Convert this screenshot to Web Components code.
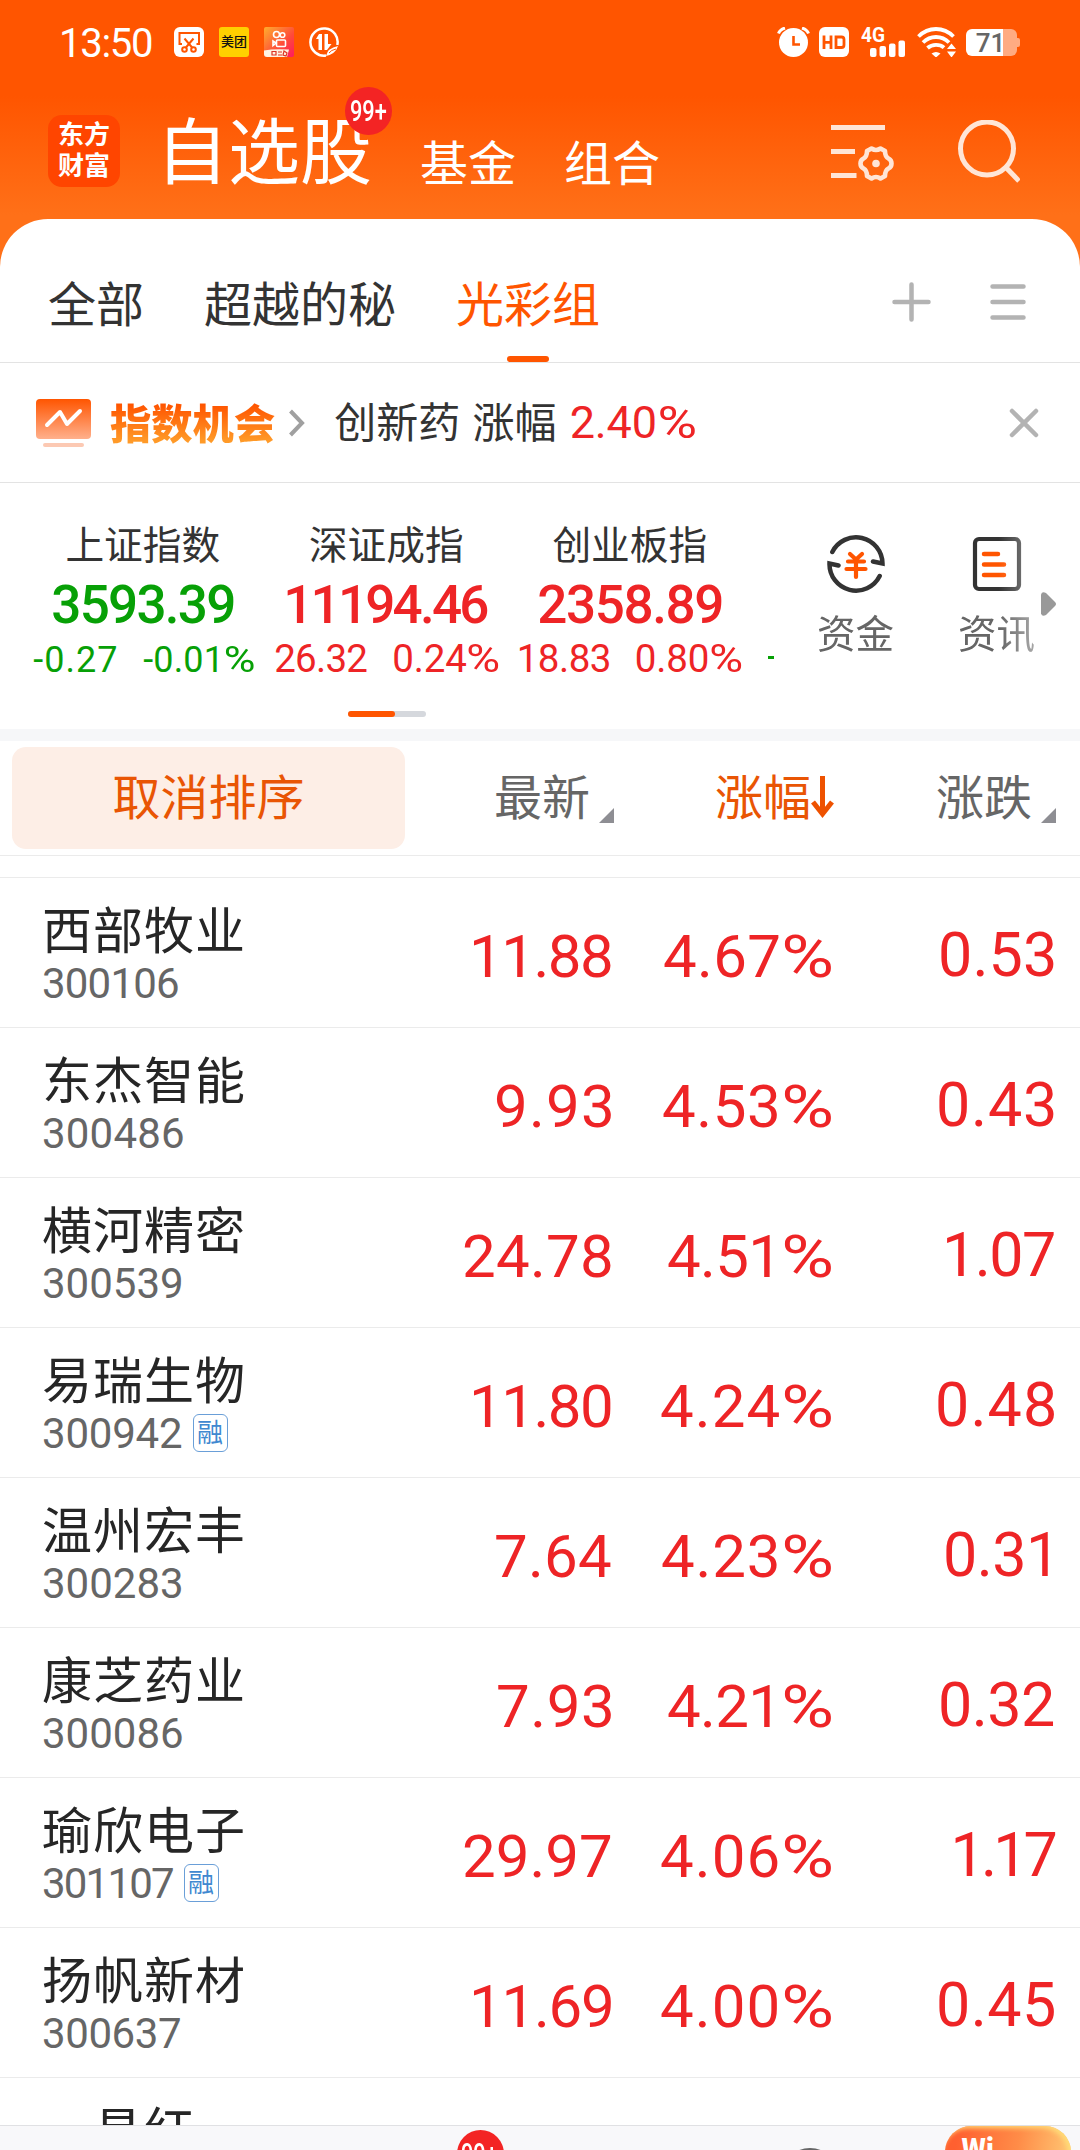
<!DOCTYPE html>
<html lang="zh-CN">
<head>
<meta charset="utf-8">
<title>自选股</title>
<style>
  html, body { margin: 0; padding: 0; }
  body {
    width: 1080px;
    height: 2150px;
    overflow: hidden;
    background: #fff;
    font-family: "Noto Sans CJK SC", sans-serif;
    --num: Roboto, "Noto Sans", sans-serif;
    --red: #ee2426;
    --green: #07a006;
    --orange: #ff5500;
    --line: #ebebeb;
  }
</style>
</head>
<body>
<stock-app></stock-app>

<script>
// Text whose letter spacing is adjusted so that its ink fills the given width.
// With the "squeeze" attribute the glyphs are condensed instead.
class FitText extends HTMLElement {
  connectedCallback() {
    this.attachShadow({ mode: "open" });
    this.shadowRoot.innerHTML = `
      <style>
        :host { display: inline-block; white-space: nowrap; flex: none; }
        span { display: inline-block; transform-origin: 0 50%; }
        i { display: inline-block; font-style: normal; transform: scaleX(1.2); transform-origin: 100% 50%; letter-spacing: 0; }
      </style>
      <span></span>
    `;
    this.fit();
  }

  fit() {
    const text = this.getAttribute("text");
    const width = Number(this.getAttribute("width"));
    const span = this.shadowRoot.querySelector("span");
    const cs = getComputedStyle(this);
    const ctx = document.createElement("canvas").getContext("2d");
    ctx.font = `${cs.fontWeight} ${cs.fontSize} ${cs.fontFamily}`;
    const m = ctx.measureText(text);
    let ink = m.actualBoundingBoxLeft + m.actualBoundingBoxRight;
    this.style.width = width + "px";

    if (this.hasAttribute("squeeze")) {
      const k = width / ink;
      span.textContent = text;
      span.style.transform = `scaleX(${k})`;
      span.style.marginLeft = m.actualBoundingBoxLeft * k + "px";
      return;
    }

    // the percent sign is drawn a little wider than the font has it
    if (text.endsWith("%")) {
      const extra = ctx.measureText("%").width * 0.2;
      ink += extra;
      span.innerHTML = `${text.slice(0, -1)}<i style="margin-left:${extra}px">%</i>`;
    } else {
      span.textContent = text;
    }
    span.style.letterSpacing = (width - ink) / (text.length - 1) + "px";
    span.style.marginLeft = m.actualBoundingBoxLeft + "px";
  }
}

class StatusBar extends HTMLElement {
  connectedCallback() {
    this.attachShadow({ mode: "open" });
    this.shadowRoot.innerHTML = `
      <style>
        :host { display: flex; height: 84px; padding: 0 60px 0 62px; color: #fff; font-family: var(--num); }
        .side { display: flex; align-items: center; height: 84px; }
        .time { font-size: 40px; line-height: 50px; font-weight: 400; margin-right: 22px; padding-top: 3px; }
        .left svg, .mt { margin-right: 15px; }
        .right { margin-left: auto; }
        svg { display: block; flex: none; }
        .mt {
          width: 30px; height: 30px; border-radius: 3px; background: #ffd000; color: #111;
          font: 500 13px/28px "Noto Sans CJK SC", sans-serif; text-align: center;
        }
        .battery { display: flex; align-items: center; }
        .cell {
          width: 51px; height: 27px; border-radius: 6px; text-align: center; margin-top: 1px;
          background: linear-gradient(90deg, #fff 37px, #ffab82 37px);
          color: #666; font-weight: 500; font-size: 26px; line-height: 28px; text-indent: -2px;
        }
        .tip { width: 3px; height: 9px; background: #ffab82; border-radius: 0 2px 2px 0; }
      </style>
      <div class="side left">
        <fit-text class="time" text="13:50" width="90"></fit-text>
        <svg width="30" height="30" viewBox="0 0 30 30">
          <rect width="30" height="30" rx="6" fill="#fff"/>
          <g fill="none" stroke="#ff5500" stroke-width="2">
            <path d="M8 17H5.500V6H25v11h-2.500"/>
            <path d="M10.500 11.500l8 9.500M19.500 11.500l-8 9.500"/>
            <circle cx="10.500" cy="22.500" r="2.300"/><circle cx="19.500" cy="22.500" r="2.300"/>
          </g>
        </svg>
        <div class="mt">美团</div>
        <svg width="30" height="30" viewBox="0 0 30 30">
          <defs>
            <linearGradient id="ks" x1="0" y1="0" x2="1" y2="1">
              <stop offset="0" stop-color="#ffae2e"/><stop offset=".6" stop-color="#ff4a3a"/><stop offset="1" stop-color="#ff1a60"/>
            </linearGradient>
          </defs>
          <rect width="30" height="30" rx="2" fill="url(#ks)"/>
          <g fill="none" stroke="#fff" stroke-width="1.600">
            <circle cx="12.500" cy="7.500" r="3"/><circle cx="18.500" cy="8" r="2.300"/>
            <rect x="12.500" y="13" width="9" height="6.500" rx="1"/>
            <path d="M12 16l-3-2v4.500z"/>
          </g>
          <path d="M0 23.500q10-2 25-1l-2 7.500H3q-3 0-3-3z" fill="#fff3e0"/>
          <path d="M8 24.500h4v3.500H8zM14 25h4M14 28h4M20 24l3 2-1 3-3-1z" stroke="#d32" stroke-width="1.200" fill="none"/>
        </svg>
        <svg width="30" height="30" viewBox="0 0 30 30">
          <path d="M28.300 18A13.600 13.600 0 1 0 17 28.500" fill="none" stroke="#fff" stroke-width="2.500"/>
          <path d="M7 12l3-5h3v16h-3.500V12z" fill="#fff"/>
          <path d="M15.500 7H19v10h3.500l-4.500 6h-2.500z" fill="#fff"/>
          <path d="M17 29q1.500-8 12-10-2.500 8-12 10z" fill="#fff"/>
          <path d="M20 26q2-3 7-4" stroke="#ff5500" stroke-width="1" fill="none"/>
        </svg>
      </div>
      <div class="side right">
        <svg width="33" height="30" viewBox="0 0 33 30" style="margin-right:9px">
          <circle cx="16.500" cy="15.500" r="14.500" fill="#fff"/>
          <path d="M1.500 6.500Q3 2.500 8 1M31.500 6.500Q30 2.500 25 1" stroke="#fff" stroke-width="3" fill="none"/>
          <path d="M16.500 9v8.500H23" stroke="#ff5500" stroke-width="2.600" fill="none"/>
        </svg>
        <svg width="30" height="30" viewBox="0 0 30 30" style="margin-right:12px">
          <rect width="30" height="30" rx="6" fill="#fff"/>
          <path d="M5 8.500v13.500M12 8.500v13.500M5 15.300h7M17 10h5.500q2.500 0 2.500 2.500v5.500q0 2.500-2.500 2.500H17z" stroke="#ff5500" stroke-width="2.800" fill="none"/>
        </svg>
        <svg width="44" height="30" viewBox="0 0 44 30" style="margin-right:12px">
          <text x="0" y="15" font-family="Roboto" font-size="21" font-weight="700" fill="#fff" textLength="24" lengthAdjust="spacingAndGlyphs">4G</text>
          <g fill="#fff">
            <rect x="9" y="21" width="6.500" height="9" rx="2"/><rect x="18.500" y="19" width="6.500" height="11" rx="2"/>
            <rect x="28" y="16.500" width="6.500" height="13.500" rx="2"/><rect x="37.500" y="13.500" width="6.500" height="16.500" rx="2"/>
          </g>
        </svg>
        <svg width="39" height="30" viewBox="0 0 39 30" style="margin-right:10px">
          <g fill="none" stroke="#fff" stroke-width="3.800">
            <path d="M1.500 9.500Q9 2 19 2t17.500 7.500"/>
            <path d="M6 15.500Q11.500 10 19 10t13 5.500"/>
            <path d="M10.500 21Q14 17.800 19 17.800t8 2.800"/>
          </g>
          <path d="M14.500 26.500q4.500-3 9 0L19 30.500zM34.500 16.500l4.500 5.500h-9zM34.500 30.500l4.500-6h-9z" fill="#fff"/>
        </svg>
        <div class="battery"><div class="cell">71</div><div class="tip"></div></div>
      </div>
    `;
  }
}

class AppHeader extends HTMLElement {
  connectedCallback() {
    this.attachShadow({ mode: "open" });
    this.shadowRoot.innerHTML = `
      <style>
        :host { display: flex; align-items: center; height: 135px; padding: 0 60px 0 48px; color: #fff; }
        .logo {
          width: 72px; height: 72px; border-radius: 14px; background: #ff4500; margin: -1px 36px 0 0;
          box-sizing: border-box; padding-top: 2px;
          font-size: 26px; line-height: 31px; font-weight: 700; text-align: center;
        }
        .title { position: relative; font-size: 72px; line-height: 80px; padding-bottom: 9px; }
        .link { font-size: 48px; line-height: 60px; padding-top: 17px; margin-left: 48px; }
        .badge {
          position: absolute; right: -20px; top: -20px; width: 47px; height: 48px; border-radius: 50%;
          background: #f32424; display: flex; align-items: center; justify-content: center;
          font: 500 29px/48px var(--num);
        }
        .tools { display: flex; align-items: center; margin-left: auto; gap: 64px; }
        svg { display: block; }
      </style>
      <div class="logo">东方<br>财富</div>
      <div class="title">自选股<div class="badge"><fit-text squeeze text="99+" width="36"></fit-text></div></div>
      <div class="link">基金</div>
      <div class="link">组合</div>
      <div class="tools">
        <svg width="63" height="64" viewBox="0 0 63 64" fill="none" stroke="#ffe5d6" stroke-width="5">
          <path d="M0 7.500h54M0 31.500h24M0 55.500h25.500"/>
          <path stroke-width="4.600" stroke-linejoin="round" d="M40.500 28.500Q45 31.500 49.500 28.500L54 31Q54 36.500 57.500 38.500Q60.500 40 60.500 43.500T57.500 48.500Q54 50.500 54 56L49.500 58.500Q45 55.500 40.500 58.500L36 56Q36 50.500 32.500 48.500Q29.500 47 29.500 43.500T32.500 38.500Q36 36.500 36 31Z"/>
          <circle cx="45" cy="43.500" r="3.800" fill="#ffe5d6" stroke="none"/>
        </svg>
        <svg width="62" height="64" viewBox="0 0 62 64" fill="none" stroke="#ffe5d6" stroke-width="5">
          <circle cx="29" cy="28.500" r="26.500"/>
          <path d="M48 47.500l13 13.500"/>
        </svg>
      </div>
    `;
  }
}

class GroupTabs extends HTMLElement {
  connectedCallback() {
    this.attachShadow({ mode: "open" });
    this.shadowRoot.innerHTML = `
      <style>
        :host {
          display: flex; height: 143px; padding: 0 54px 0 48px; gap: 60px;
          border-bottom: 1px solid #e3e3e3; color: #333; font-size: 48px; line-height: 60px;
        }
        .tab { position: relative; padding-top: 52px; }
        .active { color: var(--orange); }
        .active::after {
          content: ""; position: absolute; left: 51px; bottom: 0;
          width: 42px; height: 6px; border-radius: 3px; background: var(--orange);
        }
        .tools { margin-left: auto; display: flex; gap: 59px; padding-top: 63px; }
        svg { display: block; }
      </style>
      <div class="tab">全部</div>
      <div class="tab">超越的秘</div>
      <div class="tab active">光彩组</div>
      <div class="tools">
        <svg width="39" height="40" stroke="#b3b3b3" stroke-width="4.500" stroke-linecap="round"><path d="M2.500 20h34M19.500 2.500v35"/></svg>
        <svg width="36" height="40" stroke="#b3b3b3" stroke-width="4.500" stroke-linecap="round"><path d="M2.500 4.500h31M2.500 20h31M2.500 35.500h31"/></svg>
      </div>
    `;
  }
}

class ChanceBar extends HTMLElement {
  connectedCallback() {
    this.attachShadow({ mode: "open" });
    this.shadowRoot.innerHTML = `
      <style>
        :host {
          display: flex; align-items: center; height: 119px; padding: 0 41px 0 36px;
          border-bottom: 1px solid #e3e3e3; color: #333; font-size: 42px; line-height: 60px;
        }
        svg { display: block; flex: none; }
        .name {
          margin: 0 14px 4px 18px; font-size: 41.300px; font-weight: 900;
          background: linear-gradient(#ff5500 14px, #ff9a28 50px);
          -webkit-background-clip: text; background-clip: text; color: transparent;
        }
        .text { margin: 0 0 5px 29px; white-space: pre; word-spacing: 3px; }
        .rate { margin-left: 15px; font: 45px/60px var(--num); color: var(--red); padding-top: 1px; }
        .close { margin-left: auto; }
      </style>
      <svg width="56" height="50" viewBox="0 0 56 50">
        <defs><linearGradient id="g" x1="0" y1="0" x2="0" y2="1"><stop offset="0" stop-color="#ff5500"/><stop offset="1" stop-color="#ffb08c"/></linearGradient></defs>
        <rect x="0" y="1" width="55" height="40" rx="4" fill="url(#g)"/>
        <rect x="7" y="45" width="41" height="4" rx="2" fill="#fcc9b3"/>
        <path d="M11 27l13-13 7 12 13-13" fill="none" stroke="#fff" stroke-width="4" stroke-linecap="round" stroke-linejoin="round"/>
      </svg>
      <div class="name">指数机会</div>
      <svg width="16" height="28" fill="none" stroke="#a0a0a0" stroke-width="4"><path d="M1.500 2l11.500 12L1.500 26"/></svg>
      <div class="text">创新药 涨幅</div>
      <fit-text class="rate" text="2.40%" width="123"></fit-text>
      <svg class="close" width="30" height="30" stroke="#b3b3b3" stroke-width="4.500" stroke-linecap="round"><path d="M3 3l24 24M27 3L3 27"/></svg>
    `;
  }
}

class IndexCard extends HTMLElement {
  connectedCallback() {
    const d = JSON.parse(this.getAttribute("data"));
    this.attachShadow({ mode: "open" });
    this.shadowRoot.innerHTML = `
      <style>
        :host { display: flex; flex-direction: column; align-items: center; width: 243.500px; flex: none; color: var(--red); }
        :host([down]) { color: var(--green); }
        .name { font-size: 38.700px; line-height: 50px; color: #333; margin-top: 34px; }
        .price { font: 500 53px/60px var(--num); margin: 7.500px 0 0 2px; }
        .sub { display: flex; justify-content: center; gap: 27px; font: 38.500px/44px var(--num); margin: 2px 0 0 2px; }
        :host([down]) .sub { font-size: 36px; line-height: 46px; }
      </style>
      <div class="name">${d.name}</div>
      <fit-text class="price" text="${d.price[0]}" width="${d.price[1]}"></fit-text>
      <div class="sub">
        <fit-text text="${d.diff[0]}" width="${d.diff[1]}"></fit-text>
        <fit-text text="${d.rate[0]}" width="${d.rate[1]}"></fit-text>
      </div>
    `;
  }
}

class IndexPanel extends HTMLElement {
  connectedCallback() {
    const cards = [
      { name: "上证指数", price: ["3593.39", 181], diff: ["-0.27", 83], rate: ["-0.01%", 111], down: true },
      { name: "深证成指", price: ["11194.46", 200], diff: ["26.32", 92], rate: ["0.24%", 105] },
      { name: "创业板指", price: ["2358.89", 183], diff: ["18.83", 90], rate: ["0.80%", 105] },
    ];
    this.attachShadow({ mode: "open" });
    this.shadowRoot.innerHTML = `
      <style>
        :host { display: block; height: 246px; border-bottom: 12px solid #f6f7f9; }
        .row { display: flex; height: 228px; }
        .cards { display: flex; width: 774px; padding-left: 21px; box-sizing: border-box; overflow: hidden; }
        .next { flex: none; width: 6px; height: 3px; background: var(--green); margin: 173px 0 0 16px; }
        .actions {
          display: flex; width: 262px; padding-left: 43px; box-sizing: border-box;
          color: #666; font-size: 38.500px; line-height: 50px;
          -webkit-mask-image: linear-gradient(90deg, #000 225px, rgba(0,0,0,.55) 262px);
          mask-image: linear-gradient(90deg, #000 225px, rgba(0,0,0,.55) 262px);
        }
        .action { flex: none; width: 77px; display: flex; flex-direction: column; align-items: center; }
        .action + .action { margin-left: 64px; }
        .action svg { display: block; margin: 51px 0 12px; }
        .arrow { margin: 108px 0 0 5px; flex: none; }
        .pager { width: 78px; height: 6px; border-radius: 3px; background: #d5d8dd; margin-left: 348px; }
        .pager div { width: 47px; height: 6px; border-radius: 3px; background: var(--orange); }
      </style>
      <div class="row">
        <div class="cards">
          ${cards.map((c) => `<index-card ${c.down ? "down" : ""} data='${JSON.stringify(c)}'></index-card>`).join("")}
          <div class="next"></div>
        </div>
        <div class="actions">
          <div class="action">
            <svg width="60" height="60" viewBox="0 0 60 60" fill="none">
              <g stroke="#333" stroke-width="4.500">
                <path stroke-linecap="round" d="M6.300 18A26.500 26.500 0 0 1 56.500 29.500L47 27.500"/>
                <path stroke-linecap="round" d="M53.700 42A26.500 26.500 0 0 1 3.500 29.500L12.500 31.500"/>
              </g>
              <path stroke="#ff5500" stroke-width="4.200" stroke-linecap="round" d="M24 20l6 5.500 6-5.500M30 26v17M22 27.500h16M20.500 35h19"/>
            </svg>
            <div>资金</div>
          </div>
          <div class="action">
            <svg width="60" height="60" viewBox="0 0 60 60" fill="none">
              <rect x="8" y="5" width="44" height="50" rx="4" stroke="#333" stroke-width="4.200"/>
              <path d="M17 20h14M17 30.500h20M17 41h20" stroke="#ff5500" stroke-width="4.500" stroke-linecap="round"/>
            </svg>
            <div>资讯</div>
          </div>
        </div>
        <svg class="arrow" width="15" height="26"><path d="M0 3.500Q1 0 5 2L14 11q2 2 0 4L5 24q-4 2-5-1.500z" fill="#999"/></svg>
      </div>
      <div class="pager"><div></div></div>
    `;
  }
}

class TableHead extends HTMLElement {
  connectedCallback() {
    this.attachShadow({ mode: "open" });
    this.shadowRoot.innerHTML = `
      <style>
        :host {
          display: flex; height: 114px; border-bottom: 1px solid var(--line); margin-bottom: 21px;
          padding-left: 12px; color: #666; font-size: 48px; line-height: 60px;
        }
        .reset {
          width: 393px; height: 102px; margin-top: 6px; border-radius: 14px; background: #fdeee6; color: #e95504;
          line-height: 60px; text-align: center; padding-top: 17px; box-sizing: border-box; flex: none;
        }
        .col { display: flex; padding-top: 23px; height: 60px; }
        .latest { margin-left: 89px; }
        .rate { margin-left: 101px; color: #e95504; }
        .diff { margin-left: 101px; }
        .corner { margin: 44px 0 0 9px; }
        svg { display: block; }
        .down { margin: 12px 0 0 0; }
      </style>
      <div class="reset">取消排序</div>
      <div class="col latest">最新<svg class="corner" width="15" height="15"><path d="M15 0v15H0z" fill="#8e8e93"/></svg></div>
      <div class="col rate">涨幅<svg class="down" width="24" height="44" fill="none" stroke="#ee5200"><path stroke-width="5" d="M11.500 0v38"/><path stroke-width="5" d="M2 26l9.500 12L21 26"/></svg></div>
      <div class="col diff">涨跌<svg class="corner" width="15" height="15"><path d="M15 0v15H0z" fill="#8e8e93"/></svg></div>
    `;
  }
}

class StockRow extends HTMLElement {
  connectedCallback() {
    const [name, code, codeW, tag, price, priceW, rate, rateW, diff, diffW, inset = 0] = JSON.parse(this.getAttribute("data"));
    this.attachShadow({ mode: "open" });
    this.shadowRoot.innerHTML = `
      <style>
        :host {
          display: grid; grid-template-columns: 400px 169px 221px 222px; height: 149px;
          padding-left: 42px; border-bottom: 1px solid var(--line); color: var(--red);
        }
        .name { font-size: 50px; letter-spacing: 1px; line-height: 60px; padding-top: 19px; color: #262626; white-space: nowrap; }
        .code { display: flex; align-items: center; height: 38px; margin-top: 7px; padding-left: 1px; font: 42px/38px var(--num); color: #666; }
        .code fit-text { padding-top: 2px; }
        .tag {
          width: 35px; height: 38px; box-sizing: border-box; margin-left: 11px;
          border: 1.500px solid #6a9fd8; border-radius: 6px; color: #4088d0;
          font: 26px/31px "Noto Sans CJK SC", sans-serif; text-align: center; text-indent: -1px;
        }
        .num { text-align: right; font: 60px/70px var(--num); padding-top: 44px; }
        .diff { font-size: 61px; padding-top: 41.500px; }
      </style>
      <div>
        <div class="name">${name}</div>
        <div class="code"><fit-text text="${code}" width="${codeW}"></fit-text>${tag ? `<div class="tag">${tag}</div>` : ""}</div>
      </div>
      <div class="num"><fit-text text="${price}" width="${priceW}"></fit-text></div>
      <div class="num"><fit-text text="${rate}" width="${rateW}"></fit-text></div>
      <div class="num diff"><fit-text text="${diff}" width="${diffW}" style="margin-right:${inset}px"></fit-text></div>
    `;
  }
}

class BottomBar extends HTMLElement {
  connectedCallback() {
    this.attachShadow({ mode: "open" });
    this.shadowRoot.innerHTML = `
      <style>
        :host { display: flex; height: 24px; border-top: 1px solid #e0e1e4; background: #f8f8fa; overflow: hidden; color: #fff; }
        .badge {
          flex: none; width: 47px; height: 48px; margin: 4px 0 0 456.500px; border-radius: 50%; background: #f32424;
          text-align: center; font: 500 29px/48px var(--num);
        }
        .dot { flex: none; width: 56px; height: 56px; box-sizing: border-box; border: 5px solid #666; border-radius: 50%; margin: 21.500px 0 0 278px; }
        .promo {
          flex: none; width: 126px; height: 70px; margin-left: 107px; border-radius: 26px 26px 0 0; box-sizing: border-box;
          background: linear-gradient(100deg, #ff6030 10%, #ff8c48 55%, #ffcf7a);
          box-shadow: inset -3px 2px 5px #ffdc78;
          padding-left: 17px; font: 900 26px/42px "Noto Sans CJK SC", sans-serif;
        }
      </style>
      <div class="badge"><fit-text squeeze text="99+" width="36"></fit-text></div>
      <div class="dot"></div>
      <div class="promo">Wi</div>
    `;
  }
}

class StockApp extends HTMLElement {
  connectedCallback() {
    // name, code, code width, tag, price, width, rate, width, change, width, right inset
    const rows = [
      ["西部牧业", "300106", 135, "", "11.88", 137, "4.67%", 168, "0.53", 113],
      ["东杰智能", "300486", 140, "", "9.93", 115, "4.53%", 169, "0.43", 115],
      ["横河精密", "300539", 138, "", "24.78", 147, "4.51%", 164, "1.07", 107],
      ["易瑞生物", "300942", 139, "融", "11.80", 137, "4.24%", 171, "0.48", 116],
      ["温州宏丰", "300283", 138, "", "7.64", 115, "4.23%", 170, "0.31", 102, 6],
      ["康芝药业", "300086", 139, "", "7.93", 113, "4.21%", 164, "0.32", 113],
      ["瑜欣电子", "301107", 130, "融", "29.97", 147, "4.06%", 171, "1.17", 100],
      ["扬帆新材", "300637", 137, "", "11.69", 137, "4.00%", 171, "0.45", 115],
    ];
    this.attachShadow({ mode: "open" });
    this.shadowRoot.innerHTML = `
      <style>
        :host {
          display: flex; flex-direction: column; width: 1080px; height: 2150px;
          background: linear-gradient(#ff5500 96px, #ff7018 215px, #ff7018 400px, #fff 400px);
        }
        .panel { display: flex; flex-direction: column; flex: 1; min-height: 0; background: #fff; border-radius: 48px 48px 0 0; }
        .list { flex: 1; min-height: 0; overflow: hidden; border-top: 1px solid var(--line); }
        .partial { padding: 19px 0 0 93px; font-size: 50px; letter-spacing: 1px; line-height: 60px; color: #262626; }
      </style>
      <status-bar></status-bar>
      <app-header></app-header>
      <div class="panel">
        <group-tabs></group-tabs>
        <chance-bar></chance-bar>
        <index-panel></index-panel>
        <table-head></table-head>
        <div class="list">
          ${rows.map((r) => `<stock-row data='${JSON.stringify(r)}'></stock-row>`).join("")}
          <div class="partial">昌红</div>
        </div>
        <bottom-bar></bottom-bar>
      </div>
    `;
  }
}

customElements.define("fit-text", FitText);
customElements.define("status-bar", StatusBar);
customElements.define("app-header", AppHeader);
customElements.define("group-tabs", GroupTabs);
customElements.define("chance-bar", ChanceBar);
customElements.define("index-card", IndexCard);
customElements.define("index-panel", IndexPanel);
customElements.define("table-head", TableHead);
customElements.define("stock-row", StockRow);
customElements.define("bottom-bar", BottomBar);
customElements.define("stock-app", StockApp);
</script>
</body>
</html>
